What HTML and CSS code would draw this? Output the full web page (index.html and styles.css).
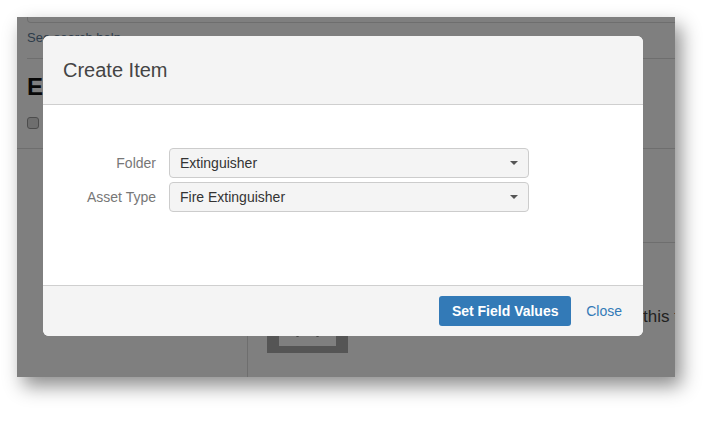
FILE: index.html
```html
<!DOCTYPE html>
<html lang="en">
<head>
<meta charset="utf-8">
<title>Create Item</title>
<link rel="stylesheet" href="styles.css">
</head>
<body>
<div class="shot">
  <div class="page">
    <div class="search-input"></div>
    <a class="help">See search help</a>
    <div class="rule"></div>
    <h1 class="page-title">Extinguisher</h1>
    <div class="check-row"><span class="checkbox"></span><span class="check-label">Show archived items</span></div>
    <div class="split">
      <div class="left-col"></div>
      <div class="right-col">
        <div class="right-top"></div>
        <div class="media">
          <div class="thumb"><div class="thumb-inner"><span class="dot"></span><span class="dot"></span></div></div>
          <p class="media-text">this thing</p>
        </div>
      </div>
    </div>
  </div>
  <div class="overlay"></div>
  <div class="modal">
    <div class="modal-header"><h4 class="modal-title">Create Item</h4></div>
    <div class="modal-body">
      <div class="form-grid">
        <label class="field-label">Folder</label>
        <div class="select"><span>Extinguisher</span><i class="caret"></i></div>
        <label class="field-label">Asset Type</label>
        <div class="select"><span>Fire Extinguisher</span><i class="caret"></i></div>
      </div>
    </div>
    <div class="modal-footer">
      <button class="btn-primary">Set Field Values</button>
      <a class="close-link">Close</a>
    </div>
  </div>
</div>
</body>
</html>
```
FILE: styles.css
```css
* { box-sizing: border-box; }
html, body { margin: 0; padding: 0; background: #fff; }
body {
  font-family: "Liberation Sans", Arial, sans-serif;
  color: #333;
  min-height: 425px;
  padding-top: 17px;
}

.shot {
  position: relative;
  margin-left: 17px;
  width: 658px;
  height: 360px;
  background: #fff;
  overflow: hidden;
  box-shadow: 6px 9px 18px rgba(0, 0, 0, 0.45);
}

.page { padding-left: 10px; }

.search-input {
  height: 6px;
  border: 1px solid #ddd;
  border-top: none;
  border-radius: 0 0 4px 4px;
  margin-right: -20px;
}

.help {
  display: block;
  margin-top: 6px;
  font-size: 13px;
  line-height: 18px;
  color: #5a7894;
}

.rule {
  margin-top: 11px;
  height: 1px;
  background: #ddd;
}

.page-title {
  margin: 14px 0 0;
  font-size: 24px;
  line-height: 28px;
  font-weight: bold;
  color: #111;
}

.check-row {
  margin-top: 15px;
  height: 13px;
  display: flex;
  align-items: center;
  gap: 8px;
}
.checkbox {
  width: 12px;
  height: 12px;
  border: 1px solid #999;
  border-radius: 3px;
  background: #ddd;
  flex: none;
}
.check-label { font-size: 13px; }

.split {
  margin-top: 19px;
  margin-left: -10px;
  padding-left: 10px;
  border-top: 1px solid #ddd;
  display: flex;
  height: 260px;
}
.left-col {
  flex: none;
  width: 221px;
  border-right: 1px solid #ddd;
}
.right-col { flex: 1; min-width: 0; }
.right-top {
  height: 94px;
  border-bottom: 1px solid #ddd;
}

.media {
  margin-top: 32px;
  display: flex;
  align-items: flex-start;
  white-space: nowrap;
}
.thumb {
  margin-left: 19px;
  width: 81px;
  height: 78px;
  padding: 0 12px 7px;
  background: #aaa;
  flex: none;
}
.thumb-inner {
  height: 100%;
  background: #fff;
  display: flex;
  align-items: flex-end;
  justify-content: space-around;
  padding: 0 8px 9px;
}
.dot { width: 3px; height: 3px; background: #888; border-radius: 50%; }
.media-text {
  flex: none;
  margin: 32px 0 0 295px;
  font-size: 17px;
  line-height: 20px;
  color: #444;
}

.overlay {
  position: absolute;
  inset: 0;
  background: rgba(0, 0, 0, 0.5);
}

.modal {
  position: absolute;
  left: 26px;
  top: 19px;
  width: 600px;
  border-radius: 6px;
  overflow: hidden;
  background: #fff;
}

.modal-header {
  height: 69px;
  background: #f4f4f4;
  border-bottom: 1px solid #cfcfcf;
  display: flex;
  align-items: center;
  padding-left: 20px;
}
.modal-title {
  margin: 0;
  font-size: 20px;
  font-weight: normal;
  color: #444;
}

.modal-body {
  height: 180px;
  padding-top: 43px;
}
.form-grid {
  display: grid;
  grid-template-columns: 113px 360px;
  column-gap: 13px;
  row-gap: 4px;
}
.field-label {
  text-align: right;
  font-size: 14px;
  line-height: 30px;
  color: #777;
}
.select {
  height: 30px;
  border: 1px solid #ccc;
  border-radius: 4px;
  background: #f4f4f4;
  display: flex;
  align-items: center;
  justify-content: space-between;
  padding: 0 10px 0 10px;
  font-size: 14px;
  color: #333;
}
.caret {
  width: 0;
  height: 0;
  border-left: 4px solid transparent;
  border-right: 4px solid transparent;
  border-top: 4px solid #555;
}

.modal-footer {
  height: 51px;
  background: #f4f4f4;
  border-top: 1px solid #cfcfcf;
  display: flex;
  align-items: center;
  justify-content: flex-end;
  gap: 15px;
  padding-right: 21px;
}
.btn-primary {
  height: 30px;
  width: 132px;
  border: none;
  border-radius: 3px;
  background: #337ab7;
  color: #fff;
  font-family: "Liberation Sans", Arial, sans-serif;
  font-size: 14px;
  font-weight: bold;
  padding: 0;
}
.close-link {
  font-size: 14px;
  color: #337ab7;
}
```
